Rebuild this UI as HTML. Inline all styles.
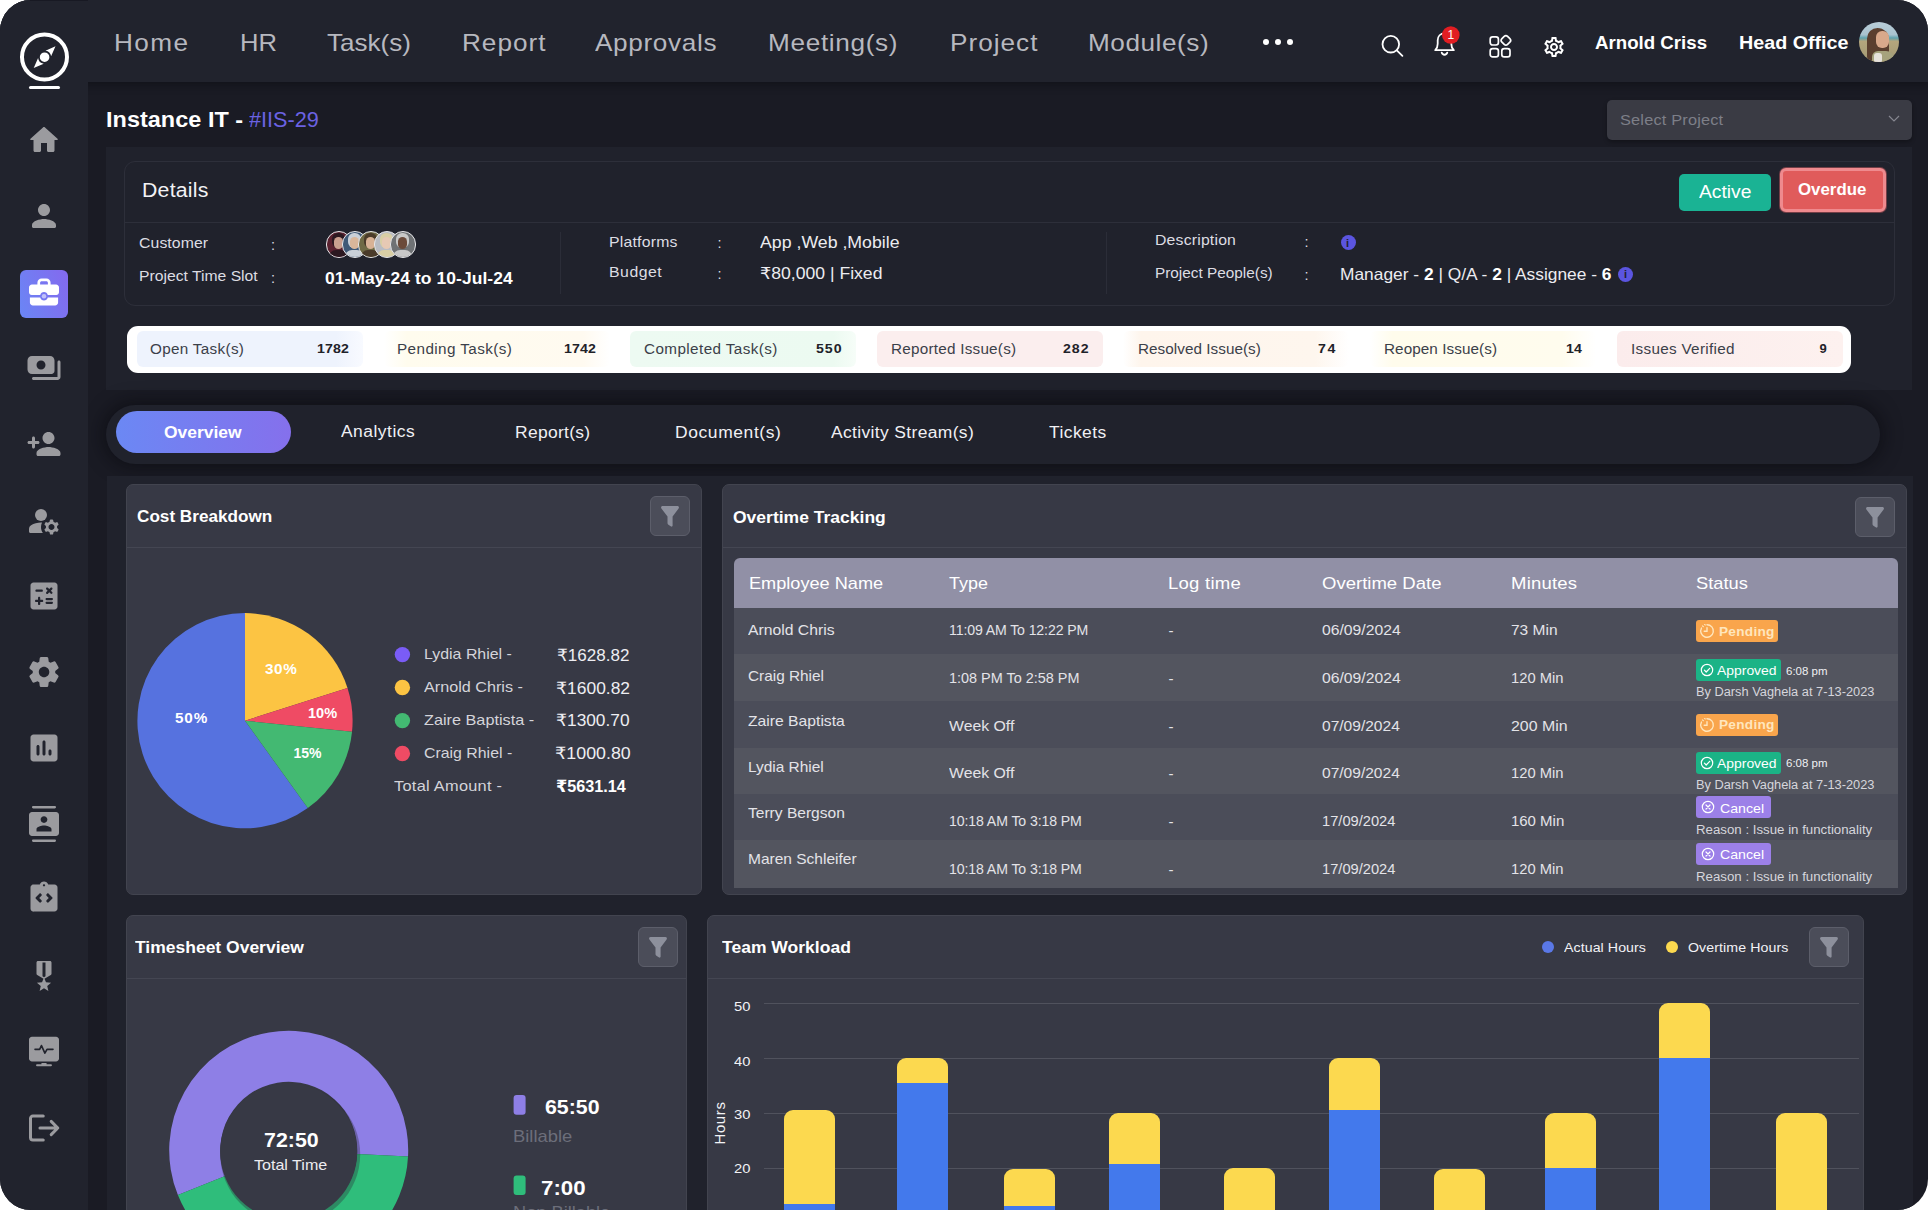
<!DOCTYPE html>
<html lang="en"><head><meta charset="utf-8"><title>Instance IT - Project Dashboard</title>
<style>
*{box-sizing:border-box;margin:0;padding:0}
html,body{width:1928px;height:1210px;background:#fff;overflow:hidden}
body{font-family:"Liberation Sans","DejaVu Sans",sans-serif}
#app{position:absolute;left:0;top:0;width:1928px;height:1210px;background:#1a1b24;border-radius:31px;overflow:hidden}
.a{position:absolute}
.t{position:absolute;white-space:nowrap;transform-origin:0 50%}
.t b{font-weight:700;color:#fff}
#side{left:0;top:0;width:88px;height:1210px;background:#21232d}
#top{left:0;top:0;width:1928px;height:82px;background:#21232d;box-shadow:0 3px 8px rgba(8,8,14,.45)}
.panel{background:#20222c}
.card{background:#373945;border:1px solid #42444f;border-radius:7px}
.hr{height:1px;background:#444652}
.fbtn{width:40px;height:40px;border-radius:6px;background:#4b4d59;border:1px solid #5c5e6a}
.pill{top:330.5px;height:36.5px;width:226px;border-radius:6px}
.row{left:734px;width:1164px;height:47px}
.bdg{height:22px;border-radius:3px}
.bar{width:51px;border-radius:9px 9px 0 0}
.grid{left:764px;width:1095px;height:1px;background:#50525d}
.ic{position:absolute;left:26px;width:36px;height:36px;fill:#9b9b9f}
</style></head><body>
<div id="app">
<!-- main panels -->
<div class="a panel" style="left:106px;top:147px;width:1806px;height:243px"></div>
<div class="a" style="left:106px;top:405px;width:1774px;height:59px;border-radius:30px;background:#20222c;box-shadow:0 0 18px 3px rgba(8,8,14,.6)"></div>
<div class="a panel" style="left:107px;top:476px;width:1806px;height:740px"></div>
<div id="top" class="a"></div>
<div id="side" class="a"></div>
<div class="a" style="left:30px;top:0;width:58px;height:1px;background:#181923"></div>
<!--SIDEBAR_S-->
<!-- logo -->
<svg class="a" style="left:18px;top:30px" width="54" height="62" viewBox="0 0 54 62">
<circle cx="26.5" cy="27" r="22.5" fill="none" stroke="#fff" stroke-width="4"/>
<g transform="translate(26.6 27.2) rotate(45)"><path d="M0 -15.4L4 -5.2A6.56 6.56 0 0 0 -4 -5.2ZM0 15.4L-4 5.2A6.56 6.56 0 0 0 4 5.2Z" fill="#fff"/><circle r="4.8" fill="#fff"/></g>
<rect x="11" y="56" width="31" height="3" rx="1.5" fill="#fff"/>
</svg>
<!-- sidebar icons -->
<svg class="ic" style="top:121.5px" viewBox="0 0 24 24"><path d="M10 19v-5h4v5c0 .55.45 1 1 1h3c.55 0 1-.45 1-1v-7h1.700c.46 0 .68-.57.330-.870L12.670 3.600c-.38-.34-.96-.34-1.340 0l-8.360 7.530c-.34.300-.13.870.330.870H5v7c0 .55.45 1 1 1h3c.55 0 1-.45 1-1z"/></svg>
<svg class="ic" style="top:198px" viewBox="0 0 24 24"><path d="M12 12c2.210 0 4-1.790 4-4s-1.790-4-4-4-4 1.790-4 4 1.790 4 4 4zm0 2c-2.670 0-8 1.340-8 4v1c0 .55.45 1 1 1h14c.55 0 1-.45 1-1v-1c0-2.660-5.330-4-8-4z"/></svg>
<div class="a" style="left:20px;top:270px;width:48px;height:48px;border-radius:6px;background:linear-gradient(70deg,#6a86f5,#8469ee)"></div>
<svg class="a" style="left:26px;top:274px" width="36" height="36" viewBox="0 0 24 24"><path fill="#fff" d="M20 7h-3.600V5.800C16.400 4.250 15.150 3 13.600 3h-3.200C8.850 3 7.600 4.250 7.600 5.800V7H4c-1.100 0-2 .9-2 2v3.200c0 .99.800 1.800 1.800 1.800h5.700c.28-1.150 1.300-2 2.500-2s2.220.85 2.500 2h5.700c1 0 1.800-.81 1.800-1.800V9c0-1.100-.9-2-2-2zM9.400 5.800c0-.55.45-1 1-1h3.200c.55 0 1 .45 1 1V7H9.400V5.800zM2.600 15.600V19c0 1.100.9 2 2 2h14.800c1.100 0 2-.9 2-2v-3.400h-6.900c-.28 1.150-1.300 2-2.500 2s-2.220-.85-2.500-2H2.600z"/><circle cx="12" cy="14.800" r="1.500" fill="#fff" opacity=".55"/></svg>
<svg class="ic" style="top:350px" viewBox="0 0 24 24"><path d="M23 8v10c0 1.100-.9 2-2 2H5c-.55 0-1-.45-1-1s.45-1 1-1h16V8c0-.55.45-1 1-1s1 .45 1 1zM4 16c-1.660 0-3-1.340-3-3V7c0-1.660 1.340-3 3-3h12c1.660 0 3 1.340 3 3v7c0 1.100-.9 2-2 2H4zm3-6c0 1.660 1.340 3 3 3s3-1.340 3-3-1.340-3-3-3-3 1.340-3 3z"/></svg>
<svg class="ic" style="top:426px" viewBox="0 0 24 24"><path d="M15 12c2.210 0 4-1.790 4-4s-1.790-4-4-4-4 1.790-4 4 1.790 4 4 4zm-9-2V8c0-.55-.45-1-1-1s-1 .45-1 1v2H2c-.55 0-1 .45-1 1s.45 1 1 1h2v2c0 .55.45 1 1 1s1-.45 1-1v-2h2c.55 0 1-.45 1-1s-.45-1-1-1H6zm9 4c-2.670 0-8 1.340-8 4v1c0 .55.45 1 1 1h14c.55 0 1-.45 1-1v-1c0-2.660-5.330-4-8-4z"/></svg>
<svg class="ic" style="top:503px" viewBox="0 0 24 24"><circle cx="10" cy="8" r="4"/><path d="M10.670 13.020C10.450 13.010 10.230 13 10 13c-2.420 0-4.680.67-6.610 1.820C2.510 15.340 2 16.320 2 17.350V19c0 .55.45 1 1 1h8.260c-.790-1.130-1.260-2.510-1.260-4 0-1.070.25-2.070.67-2.980z"/><path d="M20.750 16c0-.22-.03-.42-.06-.63l.84-.73c.18-.16.22-.42.1-.63l-.59-1.020c-.12-.21-.37-.3-.59-.22l-1.060.36c-.32-.27-.68-.48-1.080-.63l-.22-1.090c-.05-.23-.25-.4-.49-.4h-1.180c-.24 0-.44.17-.49.4l-.22 1.090c-.4.15-.76.36-1.080.63l-1.060-.36c-.23-.08-.47.02-.59.22l-.59 1.020c-.12.210-.08.470.1.630l.84.730c-.03.210-.06.410-.06.630s.03.420.06.630l-.84.730c-.18.160-.22.420-.1.630l.59 1.020c.12.210.37.300.59.220l1.060-.36c.32.27.68.48 1.080.63l.22 1.090c.05.230.25.400.49.400h1.180c.24 0 .44-.17.49-.4l.22-1.090c.4-.15.76-.36 1.080-.63l1.060.36c.23.080.47-.02.59-.22l.59-1.020c.12-.21.080-.47-.1-.63l-.84-.73c.03-.21.06-.41.06-.63zM17 18c-1.100 0-2-.9-2-2s.9-2 2-2 2 .9 2 2-.9 2-2 2z"/></svg>
<svg class="ic" style="top:578px" viewBox="0 0 24 24"><path d="M19 3H5c-1.100 0-2 .9-2 2v14c0 1.100.9 2 2 2h14c1.100 0 2-.9 2-2V5c0-1.100-.9-2-2-2zm-5.440 3.530c.29-.29.77-.29 1.060 0l.88.880.88-.880c.29-.29.77-.29 1.060 0 .29.290.29.770 0 1.060l-.880.880.880.880c.29.290.29.770 0 1.060-.29.290-.77.290-1.060 0l-.880-.870-.880.880c-.29.290-.77.290-1.060 0-.29-.29-.29-.77 0-1.060l.880-.880-.880-.880c-.3-.3-.3-.78 0-1.070zM7 7.720h3.500c.41 0 .75.340.75.750s-.34.750-.75.750H7c-.41 0-.75-.34-.75-.75s.34-.75.750-.75zM10.750 16H9.500v1.250c0 .41-.34.750-.75.750S8 17.660 8 17.250V16H6.750c-.41 0-.75-.34-.75-.75s.34-.75.750-.75H8v-1.250c0-.41.34-.75.750-.75s.75.340.75.750v1.250h1.250c.41 0 .75.340.75.750s-.34.750-.75.750zm6.500 1.250h-3.500c-.41 0-.75-.34-.75-.75s.34-.75.750-.75h3.500c.41 0 .75.340.75.750s-.34.750-.75.750zm0-2.500h-3.500c-.41 0-.75-.34-.75-.75s.34-.75.750-.75h3.500c.41 0 .75.340.75.750s-.34.750-.75.750z"/></svg>
<svg class="ic" style="top:654px" viewBox="0 0 24 24"><path d="M19.500 12c0-.23-.01-.45-.03-.68l1.860-1.410c.4-.3.510-.86.260-1.300l-1.870-3.230c-.25-.44-.79-.62-1.250-.42l-2.150.91c-.37-.26-.76-.49-1.170-.68l-.29-2.310C14.800 2.380 14.370 2 13.870 2h-3.730c-.51 0-.94.380-1 .88l-.29 2.310c-.41.190-.8.420-1.170.68l-2.150-.91c-.46-.2-1-.02-1.250.42L2.410 8.620c-.25.44-.14.990.26 1.300l1.860 1.410c-.02.220-.03.440-.03.670s.01.45.03.680l-1.860 1.410c-.4.300-.51.860-.26 1.300l1.870 3.230c.25.440.79.620 1.250.42l2.150-.91c.37.260.76.490 1.170.68l.29 2.310c.06.500.49.880.99.880h3.730c.5 0 .93-.38.990-.88l.29-2.310c.41-.19.8-.42 1.170-.68l2.150.91c.46.200 1 .02 1.250-.42l1.870-3.230c.25-.44.140-.99-.26-1.300l-1.860-1.410c.03-.23.040-.45.040-.68zm-7.460 3.500c-1.930 0-3.500-1.570-3.500-3.500s1.570-3.500 3.500-3.500 3.500 1.570 3.500 3.500-1.570 3.500-3.500 3.500z"/></svg>
<svg class="ic" style="top:730px" viewBox="0 0 24 24"><path d="M19 3H5c-1.100 0-2 .9-2 2v14c0 1.100.9 2 2 2h14c1.100 0 2-.9 2-2V5c0-1.100-.9-2-2-2zM8 17c-.55 0-1-.45-1-1v-5c0-.55.45-1 1-1s1 .45 1 1v5c0 .55-.45 1-1 1zm4 0c-.55 0-1-.45-1-1V8c0-.55.45-1 1-1s1 .45 1 1v8c0 .55-.45 1-1 1zm4 0c-.55 0-1-.45-1-1v-2c0-.55.45-1 1-1s1 .45 1 1v2c0 .55-.45 1-1 1z"/></svg>
<svg class="ic" style="top:806px" viewBox="0 0 24 24"><path d="M20 4H4c-1.100 0-2 .9-2 2v12c0 1.100.9 2 2 2h16c1.100 0 2-.9 2-2V6c0-1.100-.9-2-2-2zm-8 2.750c1.240 0 2.250 1.010 2.250 2.250s-1.010 2.250-2.250 2.250S9.750 10.240 9.750 9 10.760 6.750 12 6.750zM17 17H7v-1.500c0-1.670 3.330-2.500 5-2.500s5 .83 5 2.500V17zM4.800 0h14.400c.44 0 .8.360.8.800s-.36.800-.8.800H4.800c-.44 0-.8-.36-.8-.8s.36-.8.800-.8zM4.800 22.400h14.400c.44 0 .8.360.8.800s-.36.800-.8.800H4.800c-.44 0-.8-.36-.8-.8s.36-.8.800-.8z"/></svg>
<svg class="ic" style="top:880px" viewBox="0 0 24 24"><path d="M19 3h-4.180C14.400 1.840 13.300 1 12 1s-2.400.84-2.820 2H5c-.14 0-.27.010-.4.040-.39.080-.74.280-1.010.55-.18.180-.33.400-.43.640-.1.230-.16.490-.16.770v14c0 .27.060.54.160.78s.25.450.43.640c.27.270.62.470 1.010.55.130.2.260.3.400.03h14c1.100 0 2-.9 2-2V5c0-1.100-.9-2-2-2zm-8.700 10.470c.29.290.29.770 0 1.060l-.35.350c-.29.290-.77.290-1.060 0l-2.350-2.350c-.29-.29-.29-.77 0-1.060l2.350-2.350c.29-.29.770-.29 1.060 0l.35.350c.29.290.29.770 0 1.060L8.830 12l1.470 1.470zM12 4.250c-.41 0-.75-.34-.75-.75s.34-.75.750-.75.750.34.750.75-.34.750-.75.750zm1.700 10.280c-.29-.29-.29-.77 0-1.060L15.170 12l-1.470-1.470c-.29-.29-.29-.77 0-1.060l.35-.35c.29-.29.770-.29 1.060 0l2.350 2.350c.29.290.29.770 0 1.060l-2.350 2.350c-.29.290-.77.290-1.060 0l-.35-.35z"/></svg>
<svg class="ic" style="top:958px" viewBox="0 0 24 24"><path d="M17 10.430V3c0-.55-.45-1-1-1H8c-.55 0-1 .45-1 1v7.430c0 .35.180.680.490.860l4.180 2.510-.99 2.340-3.410.29 2.590 2.240L9.070 22 12 20.230 14.930 22l-.78-3.330 2.590-2.240-3.410-.29-.99-2.340 4.180-2.510c.3-.18.480-.5.480-.86zm-4 1.800l-1 .6-1-.6V3h2v9.230z"/></svg>
<svg class="ic" style="top:1033px" viewBox="0 0 24 24"><path d="M20 2.500H4c-1.100 0-2 .9-2 2V17c0 1.100.9 2 2 2h16c1.100 0 2-.9 2-2V4.500c0-1.100-.9-2-2-2zM10.300 20h3.400v.900h3c.33 0 .6.270.6.600s-.27.600-.6.600H7.300c-.33 0-.6-.27-.6-.600s.27-.600.600-.600h3V20z"/><path d="M6 10.900h3.100l1.200-2.500 2.300 5 1.400-2.500H18" fill="none" stroke="#21232d" stroke-width="1.100" stroke-linejoin="round" stroke-linecap="round"/></svg>
<svg class="ic" style="top:1110px;fill:none;stroke:#9b9b9f;stroke-width:2;stroke-linecap:round;stroke-linejoin:round" viewBox="0 0 24 24"><path d="M11.500 4H4.600C3.700 4 3 4.700 3 5.600v12.800c0 .900.700 1.600 1.600 1.600h6.900"/><path d="M9.300 12h11.700M16.800 7.600l4.400 4.400-4.400 4.400"/></svg>
<!--SIDEBAR_E-->
<!--TOPICONS_S-->
<div class="a" style="left:1263px;top:39px;width:6px;height:6px;border-radius:50%;background:#fff"></div>
<div class="a" style="left:1275px;top:39px;width:6px;height:6px;border-radius:50%;background:#fff"></div>
<div class="a" style="left:1287px;top:39px;width:6px;height:6px;border-radius:50%;background:#fff"></div>
<svg class="a" style="left:1378px;top:31px" width="30" height="30" viewBox="0 0 30 30"><circle cx="12.800" cy="13.200" r="8.300" fill="none" stroke="#fff" stroke-width="1.800"/><path d="M18.800 19.300L24.400 24.900" stroke="#fff" stroke-width="1.800" stroke-linecap="round"/></svg>
<svg class="a" style="left:1430px;top:24px" width="34" height="36" viewBox="0 0 34 36"><path d="M5.200 26.200h18.600c-1.700-1.600-2.500-3.500-2.500-6.500v-3.400c0-4-2.800-6.900-6.800-6.900s-6.800 2.900-6.800 6.900v3.400c0 3-.8 4.900-2.500 6.500z" fill="none" stroke="#fff" stroke-width="1.800" stroke-linejoin="round"/><path d="M11.700 28.600a2.900 2.900 0 0 0 5.600 0" fill="none" stroke="#fff" stroke-width="1.800" stroke-linecap="round"/><circle cx="20.800" cy="11" r="8.800" fill="#e11d22"/></svg>
<svg class="a" style="left:1488px;top:34px" width="26" height="26" viewBox="0 0 26 26"><g fill="none" stroke="#fff" stroke-width="1.700"><rect x="2.200" y="2.800" width="8.200" height="8.200" rx="2.400"/><rect x="2.200" y="14.600" width="8.200" height="8.200" rx="2.400"/><rect x="13.800" y="14.600" width="8.200" height="8.200" rx="2.400"/><rect x="13.900" y="2.400" width="8" height="8" rx="2.400" transform="rotate(45 17.900 6.400)"/></g></svg>
<svg class="a" style="left:1541.500px;top:34.500px" width="24" height="24" viewBox="0 0 24 24"><path fill="#fff" d="M19.430 12.980c.04-.32.070-.64.070-.98 0-.34-.03-.66-.07-.98l2.110-1.650c.19-.15.240-.42.120-.64l-2-3.460c-.09-.16-.26-.25-.44-.25-.06 0-.12.010-.17.030l-2.490 1c-.52-.4-1.080-.73-1.690-.98l-.38-2.650C14.460 2.180 14.250 2 14 2h-4c-.25 0-.46.180-.49.420l-.38 2.650c-.61.250-1.170.59-1.690.98l-2.490-1c-.06-.02-.12-.03-.18-.03-.17 0-.34.09-.43.250l-2 3.460c-.13.220-.07.490.12.640l2.110 1.650c-.04.320-.07.650-.07.980s.03.660.07.980l-2.110 1.650c-.19.150-.24.420-.12.640l2 3.460c.09.160.26.250.44.250.06 0 .12-.01.17-.03l2.490-1c.52.400 1.080.73 1.690.98l.38 2.650c.03.240.24.420.49.420h4c.25 0 .46-.18.490-.42l.38-2.650c.61-.25 1.170-.59 1.690-.98l2.490 1c.06.020.12.030.18.030.17 0 .34-.09.43-.25l2-3.460c.12-.22.070-.49-.12-.64l-2.110-1.650zm-1.980-1.710c.04.310.05.520.05.730 0 .21-.02.430-.05.730l-.14 1.130.89.700 1.080.84-.7 1.210-1.270-.51-1.040-.42-.9.680c-.43.320-.84.560-1.250.73l-1.060.43-.16 1.130-.2 1.350h-1.400l-.19-1.350-.16-1.130-1.060-.43c-.43-.18-.83-.41-1.230-.71l-.91-.7-1.060.43-1.270.51-.7-1.210 1.080-.84.890-.7-.14-1.130c-.03-.31-.05-.54-.05-.74s.02-.43.050-.73l.14-1.130-.89-.7-1.080-.84.700-1.210 1.270.51 1.040.42.900-.68c.43-.32.840-.56 1.250-.73l1.060-.43.160-1.130.2-1.350h1.390l.19 1.350.16 1.130 1.060.43c.43.180.83.410 1.230.71l.91.700 1.060-.43 1.270-.51.700 1.210-1.070.85-.89.700.14 1.130zM12 8c-2.210 0-4 1.790-4 4s1.790 4 4 4 4-1.790 4-4-1.790-4-4-4zm0 6c-1.100 0-2-.9-2-2s.9-2 2-2 2 .9 2 2-.9 2-2 2z"/></svg>
<div class="a" style="left:1859px;top:22px;width:40px;height:40px;border-radius:50%;overflow:hidden;background:linear-gradient(180deg,#b9cdd8 0,#a9c3cf 32%,#5fa3ae 40%,#b4a57d 48%,#a39a74 100%)"><div class="a" style="left:8px;top:6px;width:22px;height:36px;border-radius:11px 12px 6px 8px;background:#5b3f2f"></div><div class="a" style="left:17px;top:9px;width:13px;height:17px;border-radius:6px;background:#d9a98b"></div><div class="a" style="left:13px;top:29px;width:22px;height:14px;border-radius:6px 8px 0 0;background:#a6a27d"></div><div class="a" style="left:15px;top:31px;width:8px;height:10px;background:#e7e2dc;border-radius:3px"></div></div>
<!--TOPICONS_E-->
<!-- select -->
<div class="a" style="left:1607px;top:100px;width:305px;height:40px;border-radius:5px;background:#3a3b44;box-shadow:0 2px 4px rgba(0,0,0,.3)"></div>
<svg class="a" style="left:1887px;top:114px" width="14" height="9" viewBox="0 0 14 9"><path d="M2 2l5 5 5-5" fill="none" stroke="#85868f" stroke-width="1.2"/></svg>
<!-- details card -->
<div class="a" style="left:124px;top:161px;width:1771px;height:145px;border:1px solid #2d2f3a;border-radius:11px"></div>
<div class="a" style="left:125px;top:222px;width:1769px;height:1px;background:#2d2f3a"></div>
<div class="a" style="left:560px;top:232px;width:1px;height:62px;background:#2b2d38"></div>
<div class="a" style="left:1106px;top:232px;width:1px;height:62px;background:#2b2d38"></div>
<!--AVATARS_S-->
<div class="a" style="left:325.5px;top:231px;width:26.5px;height:26.5px;border-radius:50%;border:1.5px solid #e7e7ea;background:#5a2230;overflow:hidden"><div class="a" style="left:5px;top:1px;width:13px;height:15px;border-radius:6px;background:#2b1820"></div><div class="a" style="left:7px;top:5px;width:9.5px;height:12px;border-radius:5px;background:#caa08f"></div><div class="a" style="left:2px;top:18px;width:19px;height:10px;border-radius:7px 7px 0 0;background:#2b1820"></div></div>
<div class="a" style="left:341.6px;top:231px;width:26.5px;height:26.5px;border-radius:50%;border:1.5px solid #e7e7ea;background:#3f5a78;overflow:hidden"><div class="a" style="left:5px;top:1px;width:13px;height:15px;border-radius:6px;background:#c9d0d8"></div><div class="a" style="left:7px;top:5px;width:9.5px;height:12px;border-radius:5px;background:#d9b69a"></div><div class="a" style="left:2px;top:18px;width:19px;height:10px;border-radius:7px 7px 0 0;background:#c9d0d8"></div></div>
<div class="a" style="left:357.6px;top:231px;width:26.5px;height:26.5px;border-radius:50%;border:1.5px solid #e7e7ea;background:#6f6a45;overflow:hidden"><div class="a" style="left:5px;top:1px;width:13px;height:15px;border-radius:6px;background:#4a3b2a"></div><div class="a" style="left:7px;top:5px;width:9.5px;height:12px;border-radius:5px;background:#d8b295"></div><div class="a" style="left:2px;top:18px;width:19px;height:10px;border-radius:7px 7px 0 0;background:#4a3b2a"></div></div>
<div class="a" style="left:373.6px;top:231px;width:26.5px;height:26.5px;border-radius:50%;border:1.5px solid #e7e7ea;background:#b9bcc2;overflow:hidden"><div class="a" style="left:5px;top:1px;width:13px;height:15px;border-radius:6px;background:#d9cfa5"></div><div class="a" style="left:7px;top:5px;width:9.5px;height:12px;border-radius:5px;background:#e6c9b4"></div><div class="a" style="left:2px;top:18px;width:19px;height:10px;border-radius:7px 7px 0 0;background:#d9cfa5"></div></div>
<div class="a" style="left:389.7px;top:231px;width:26.5px;height:26.5px;border-radius:50%;border:1.5px solid #e7e7ea;background:#6f7275;overflow:hidden"><div class="a" style="left:5px;top:1px;width:13px;height:15px;border-radius:6px;background:#c8c8c8"></div><div class="a" style="left:7px;top:5px;width:9.5px;height:12px;border-radius:5px;background:#6b4a3a"></div><div class="a" style="left:2px;top:18px;width:19px;height:10px;border-radius:7px 7px 0 0;background:#c8c8c8"></div></div>
<!--AVATARS_E-->
<div class="a" style="left:1340.5px;top:235px;width:15px;height:15px;border-radius:50%;background:#5b55e0"></div>
<div class="a" style="left:1618.3px;top:266.5px;width:15px;height:15px;border-radius:50%;background:#5b55e0"></div>
<div class="a" style="left:1679px;top:173.5px;width:91.5px;height:37.5px;border-radius:5px;background:#1ab394"></div>
<div class="a" style="left:1780px;top:168px;width:106px;height:44px;border-radius:6px;background:#e05b5b;border:3px solid #ef8a8e;box-shadow:0 0 0 1px rgba(200,90,95,.5)"></div>
<!-- stat bar -->
<div class="a" style="left:127px;top:326px;width:1724px;height:47px;border-radius:11px;background:#fff"></div>
<div class="a pill" style="left:137px;background:linear-gradient(90deg,#eef3fd 0,#eef3fd 88%,#f8faff 100%)"></div>
<div class="a pill" style="left:384px;background:linear-gradient(90deg,#fff 0,#fffcee 10%,#fffaf0 88%,#fff 100%)"></div>
<div class="a pill" style="left:630px;background:linear-gradient(90deg,#edfaf2 0,#ecfaf1 90%,#f6fdf8 100%)"></div>
<div class="a pill" style="left:877px;background:#fbeeee"></div>
<div class="a pill" style="left:1123px;background:linear-gradient(90deg,#fff 0,#fef5ec 8%,#fef6ee 85%,#fff 100%)"></div>
<div class="a pill" style="left:1370px;background:linear-gradient(90deg,#fff 0,#fffcec 10%,#fffcee 85%,#fff 100%)"></div>
<div class="a pill" style="left:1617px;background:linear-gradient(90deg,#fbecec 0,#fdf1ef 100%)"></div>
<!-- tabs -->
<div class="a" style="left:116px;top:411px;width:175px;height:42px;border-radius:21px;background:linear-gradient(90deg,#6b88f4,#8570ec)"></div>
<!-- cards -->
<div class="a card" style="left:126px;top:484px;width:576px;height:411px"></div>
<div class="a hr" style="left:127px;top:547px;width:574px"></div>
<div class="a fbtn" style="left:650px;top:496px"></div>
<div class="a card" style="left:722px;top:484px;width:1185px;height:411px"></div>
<div class="a hr" style="left:723px;top:547px;width:1183px"></div>
<div class="a fbtn" style="left:1855px;top:497px"></div>
<div class="a card" style="left:126px;top:915px;width:561px;height:320px"></div>
<div class="a hr" style="left:127px;top:978px;width:559px"></div>
<div class="a fbtn" style="left:638px;top:927px"></div>
<div class="a card" style="left:707px;top:915px;width:1157px;height:320px"></div>
<div class="a hr" style="left:708px;top:978px;width:1155px"></div>
<div class="a fbtn" style="left:1809px;top:927px"></div>
<!--FUNNELS_S-->
<svg class="a" style="left:660px;top:505px" width="20" height="23" viewBox="0 0 20 23"><path d="M2.600 1h14.800c1.300 0 2 1.400 1.200 2.400l-6 8V20.600c0 .8-.8 1.300-1.500.9l-2.700-1.700c-.5-.3-.9-.9-.9-1.500v-6.900l-6.100-8C.6 2.400 1.300 1 2.600 1z" fill="#8d909c"/></svg>
<svg class="a" style="left:1865px;top:506px" width="20" height="23" viewBox="0 0 20 23"><path d="M2.600 1h14.800c1.300 0 2 1.400 1.200 2.400l-6 8V20.600c0 .8-.8 1.300-1.500.9l-2.700-1.700c-.5-.3-.9-.9-.9-1.500v-6.900l-6.100-8C.6 2.400 1.300 1 2.600 1z" fill="#8d909c"/></svg>
<svg class="a" style="left:648px;top:936px" width="20" height="23" viewBox="0 0 20 23"><path d="M2.600 1h14.800c1.300 0 2 1.400 1.200 2.400l-6 8V20.600c0 .8-.8 1.300-1.500.9l-2.700-1.700c-.5-.3-.9-.9-.9-1.500v-6.900l-6.100-8C.6 2.400 1.300 1 2.600 1z" fill="#8d909c"/></svg>
<svg class="a" style="left:1819px;top:936px" width="20" height="23" viewBox="0 0 20 23"><path d="M2.600 1h14.800c1.300 0 2 1.400 1.200 2.400l-6 8V20.600c0 .8-.8 1.300-1.500.9l-2.700-1.700c-.5-.3-.9-.9-.9-1.500v-6.900l-6.100-8C.6 2.400 1.300 1 2.600 1z" fill="#8d909c"/></svg>
<!--FUNNELS_E-->
<!--PIE_S-->
<svg class="a" style="left:0;top:0" width="720" height="900" viewBox="0 0 720 900"><path d="M245 720.7L307.79 808.08A107.6 107.6 0 1 1 245.00 613.10Z" fill="#5672df"/><path d="M245 720.7L245.00 613.10A107.6 107.6 0 0 1 347.51 687.99Z" fill="#fcc443"/><path d="M245 720.7L347.51 687.99A107.6 107.6 0 0 1 352.03 731.76Z" fill="#ef4b64"/><path d="M245 720.7L352.03 731.76A107.6 107.6 0 0 1 307.79 808.08Z" fill="#43b972"/><circle cx="402.400" cy="654.6" r="7.700" fill="#7a5cf6"/><circle cx="402.400" cy="687.5" r="7.700" fill="#fcc443"/><circle cx="402.400" cy="720.6" r="7.700" fill="#43b972"/><circle cx="402.400" cy="753.5" r="7.700" fill="#ef4b64"/></svg>
<!--PIE_E-->
<!--TABLE_S-->
<div class="a" style="left:734px;top:558px;width:1164px;height:50px;background:#9190a6;border-radius:6px 6px 0 0"></div><div class="a row" style="top:608px;height:46px;background:#4b4d59"></div><div class="a row" style="top:654px;height:47px;background:#53555f"></div><div class="a row" style="top:701px;height:47px;background:#4b4d59"></div><div class="a row" style="top:748px;height:46px;background:#53555f"></div><div class="a row" style="top:794px;height:46px;background:#4b4d59"></div><div class="a row" style="top:840px;height:48px;background:#53555f"></div><div class="a bdg" style="left:1696.3px;top:620.3px;width:82px;background:#f9a54c"></div><div class="a bdg" style="left:1696.3px;top:714px;width:82px;background:#f9a54c"></div><div class="a bdg" style="left:1696.3px;top:659.3px;width:85.2px;background:#1bb386"></div><div class="a bdg" style="left:1696.3px;top:751.8px;width:85.2px;background:#1bb386"></div><div class="a bdg" style="left:1696.3px;top:796.4px;width:75.2px;background:#9c80e8"></div><div class="a bdg" style="left:1696.3px;top:843.2px;width:75.2px;background:#9c80e8"></div><svg class="a" style="left:1698.8px;top:623.3px" width="16" height="16" viewBox="0 0 16 16"><path d="M8 1.700A6.300 6.300 0 1 1 2.500 5" fill="none" stroke="#ffe6bd" stroke-width="1.400" stroke-linecap="round"/><path d="M8 4.600V8.300H5.200" fill="none" stroke="#ffe6bd" stroke-width="1.400" stroke-linecap="round"/><path d="M3.400 2.900l1 .8M5.500 1.600l.9.400" stroke="#ffe6bd" stroke-width="1.100" stroke-linecap="round"/></svg><svg class="a" style="left:1698.8px;top:717px" width="16" height="16" viewBox="0 0 16 16"><path d="M8 1.700A6.300 6.300 0 1 1 2.500 5" fill="none" stroke="#ffe6bd" stroke-width="1.400" stroke-linecap="round"/><path d="M8 4.600V8.300H5.200" fill="none" stroke="#ffe6bd" stroke-width="1.400" stroke-linecap="round"/><path d="M3.400 2.900l1 .8M5.500 1.600l.9.400" stroke="#ffe6bd" stroke-width="1.100" stroke-linecap="round"/></svg><svg class="a" style="left:1699.8px;top:663.3px" width="14" height="14" viewBox="0 0 14 14"><circle cx="7" cy="7" r="5.700" fill="none" stroke="#fff" stroke-width="1.200"/><path d="M4.400 7.200l1.800 1.800 3.500-3.700" fill="none" stroke="#fff" stroke-width="1.200" stroke-linecap="round" stroke-linejoin="round"/></svg><svg class="a" style="left:1699.8px;top:755.8px" width="14" height="14" viewBox="0 0 14 14"><circle cx="7" cy="7" r="5.700" fill="none" stroke="#fff" stroke-width="1.200"/><path d="M4.400 7.200l1.800 1.800 3.500-3.700" fill="none" stroke="#fff" stroke-width="1.200" stroke-linecap="round" stroke-linejoin="round"/></svg><svg class="a" style="left:1700.5px;top:800.4px" width="14" height="14" viewBox="0 0 14 14"><circle cx="7" cy="7" r="5.700" fill="none" stroke="#fff" stroke-width="1.200"/><path d="M5 5l4 4M9 5l-4 4" fill="none" stroke="#fff" stroke-width="1.200" stroke-linecap="round"/></svg><svg class="a" style="left:1700.5px;top:847.2px" width="14" height="14" viewBox="0 0 14 14"><circle cx="7" cy="7" r="5.700" fill="none" stroke="#fff" stroke-width="1.200"/><path d="M5 5l4 4M9 5l-4 4" fill="none" stroke="#fff" stroke-width="1.200" stroke-linecap="round"/></svg>
<!--TABLE_E-->
<!--DONUT_S-->
<svg class="a" style="left:126px;top:980px" width="560" height="236" viewBox="126 980 560 236"><path d="M177.90 1195.07A119.5 119.5 0 1 1 408.04 1156.55L357.11 1153.89A68.5 68.5 0 1 0 225.19 1175.96Z" fill="#8e7fe6"/><path d="M408.04 1156.55A119.5 119.5 0 0 1 177.90 1195.07L225.19 1175.96A68.5 68.5 0 0 0 357.11 1153.89Z" fill="#2fbd7b"/><circle cx="290.2" cy="1154.3" r="70.0" fill="#2a2c36" opacity=".35"/><circle cx="288.7" cy="1151.8999999999999" r="68.5" fill="#373945"/><rect x="513.600" y="1095" width="12" height="19.700" rx="3" fill="#8e7fe6"/><rect x="513.600" y="1175.400" width="12" height="19.700" rx="3" fill="#2fbd7b"/></svg>
<!--DONUT_E-->
<!--BARS_S-->
<div class="a grid" style="top:1002.5px"></div><div class="a grid" style="top:1057.9px"></div><div class="a grid" style="top:1112.7px"></div><div class="a grid" style="top:1167.5px"></div><div class="a bar" style="left:784px;top:1110px;height:130px;background:#fcd94f"></div><div class="a" style="left:784px;top:1204px;width:51px;height:36px;background:#4379ec"></div><div class="a bar" style="left:897.4px;top:1058.2px;height:181.79999999999995px;background:#fcd94f"></div><div class="a" style="left:897.4px;top:1083.3px;width:51px;height:156.70000000000005px;background:#4379ec"></div><div class="a bar" style="left:1004.2px;top:1168.5px;height:71.5px;background:#fcd94f"></div><div class="a" style="left:1004.2px;top:1205.5px;width:51px;height:34.5px;background:#4379ec"></div><div class="a bar" style="left:1108.7px;top:1113px;height:127px;background:#fcd94f"></div><div class="a" style="left:1108.7px;top:1163.8px;width:51px;height:76.20000000000005px;background:#4379ec"></div><div class="a bar" style="left:1224px;top:1168px;height:72px;background:#fcd94f"></div><div class="a bar" style="left:1328.9px;top:1058.2px;height:181.79999999999995px;background:#fcd94f"></div><div class="a" style="left:1328.9px;top:1110px;width:51px;height:130px;background:#4379ec"></div><div class="a bar" style="left:1434px;top:1168.5px;height:71.5px;background:#fcd94f"></div><div class="a bar" style="left:1545.3px;top:1113px;height:127px;background:#fcd94f"></div><div class="a" style="left:1545.3px;top:1167.5px;width:51px;height:72.5px;background:#4379ec"></div><div class="a bar" style="left:1658.8px;top:1003px;height:237px;background:#fcd94f"></div><div class="a" style="left:1658.8px;top:1058.2px;width:51px;height:181.79999999999995px;background:#4379ec"></div><div class="a bar" style="left:1776px;top:1113px;height:127px;background:#fcd94f"></div><div class="a" style="left:1542.200px;top:941.300px;width:12px;height:12px;border-radius:50%;background:#5a78e6"></div><div class="a" style="left:1665.700px;top:941.300px;width:12px;height:12px;border-radius:50%;background:#fcd94f"></div><div class="t" style="left:689.600px;top:1113px;width:60px;height:20px;line-height:20px;text-align:center;font-size:15px;letter-spacing:.6px;color:#f2f2f5;transform-origin:50% 50%;transform:rotate(-90deg)">Hours</div>
<!--BARS_E-->
<span class="t" style="font-size:24px;letter-spacing:1.34px;left:114.0px;transform:scaleX(1.090);top:27.4px;line-height:31px;color:#b7b8bf;">Home</span>
<span class="t" style="font-size:24px;left:240.0px;transform:scaleX(1.065);top:27.4px;line-height:31px;color:#b7b8bf;">HR</span>
<span class="t" style="font-size:24px;left:327.0px;transform:scaleX(1.085);top:27.4px;line-height:31px;color:#b7b8bf;">Task(s)</span>
<span class="t" style="font-size:24px;letter-spacing:0.90px;left:462.0px;transform:scaleX(1.090);top:27.4px;line-height:31px;color:#b7b8bf;">Report</span>
<span class="t" style="font-size:24px;letter-spacing:0.60px;left:595.0px;transform:scaleX(1.090);top:27.4px;line-height:31px;color:#b7b8bf;">Approvals</span>
<span class="t" style="font-size:24px;letter-spacing:0.61px;left:768.0px;transform:scaleX(1.090);top:27.4px;line-height:31px;color:#b7b8bf;">Meeting(s)</span>
<span class="t" style="font-size:24px;letter-spacing:0.92px;left:950.0px;transform:scaleX(1.090);top:27.4px;line-height:31px;color:#b7b8bf;">Project</span>
<span class="t" style="font-size:24px;letter-spacing:0.50px;left:1088.0px;transform:scaleX(1.090);top:27.4px;line-height:31px;color:#b7b8bf;">Module(s)</span>
<span class="t" style="font-size:18.5px;font-weight:700;left:1594.8px;transform:scaleX(1.009);top:31.1px;line-height:24px;color:#fff;">Arnold Criss</span>
<span class="t" style="font-size:18.5px;font-weight:700;left:1738.8px;transform:scaleX(1.065);top:30.9px;line-height:24px;color:#fff;">Head Office</span>
<span class="t" style="font-size:12px;left:1447.5px;top:27.1px;line-height:16px;color:#fff;">1</span>
<span class="t" style="font-size:21.5px;font-weight:700;letter-spacing:0.03px;left:106.1px;transform:scaleX(1.090);top:105.6px;line-height:28px;color:#fff;">Instance IT -</span>
<span class="t" style="font-size:21.5px;left:249.1px;transform:scaleX(1.006);top:105.8px;line-height:28px;color:#6b62e2;">#IIS-29</span>
<span class="t" style="font-size:15px;letter-spacing:0.16px;left:1620.4px;transform:scaleX(1.090);top:109.8px;line-height:20px;color:#7d7f88;">Select Project</span>
<span class="t" style="font-size:19.5px;letter-spacing:0.22px;left:141.7px;transform:scaleX(1.090);top:178.3px;line-height:25px;color:#f2f2f5;">Details</span>
<span class="t" style="font-size:14.5px;letter-spacing:0.08px;left:139.4px;transform:scaleX(1.090);top:233.6px;line-height:19px;color:#dddde3;">Customer</span>
<span class="t" style="font-size:14.5px;left:270.9px;top:235.7px;line-height:19px;color:#dddde3;">:</span>
<span class="t" style="font-size:14.5px;left:139.4px;transform:scaleX(1.083);top:267.2px;line-height:19px;color:#dddde3;">Project Time Slot</span>
<span class="t" style="font-size:14.5px;left:270.9px;top:268.7px;line-height:19px;color:#dddde3;">:</span>
<span class="t" style="font-size:16px;font-weight:700;letter-spacing:0.07px;left:324.9px;transform:scaleX(1.090);top:267.8px;line-height:21px;color:#fff;">01-May-24 to 10-Jul-24</span>
<span class="t" style="font-size:14.5px;letter-spacing:0.20px;left:609.4px;transform:scaleX(1.090);top:233.0px;line-height:19px;color:#dddde3;">Platforms</span>
<span class="t" style="font-size:14.5px;left:717.4px;top:233.7px;line-height:19px;color:#dddde3;">:</span>
<span class="t" style="font-size:16.5px;left:760.1px;transform:scaleX(1.074);top:232.3px;line-height:21px;color:#ececf0;">App ,Web ,Mobile</span>
<span class="t" style="font-size:14.5px;letter-spacing:0.48px;left:609.4px;transform:scaleX(1.090);top:263.0px;line-height:19px;color:#dddde3;">Budget</span>
<span class="t" style="font-size:14.5px;left:717.4px;top:265.2px;line-height:19px;color:#dddde3;">:</span>
<span class="t" style="font-size:16.5px;left:760.1px;transform:scaleX(1.067);top:263.3px;line-height:21px;color:#ececf0;">&#8377;80,000 | Fixed</span>
<span class="t" style="font-size:14.5px;letter-spacing:0.17px;left:1155.4px;transform:scaleX(1.090);top:231.0px;line-height:19px;color:#dddde3;">Description</span>
<span class="t" style="font-size:14.5px;left:1304.4px;top:233.2px;line-height:19px;color:#dddde3;">:</span>
<span class="t" style="font-size:14.5px;left:1155.4px;transform:scaleX(1.058);top:263.8px;line-height:19px;color:#dddde3;">Project People(s)</span>
<span class="t" style="font-size:14.5px;left:1304.4px;top:266.2px;line-height:19px;color:#dddde3;">:</span>
<span class="t" style="font-size:16.5px;left:1340.1px;transform:scaleX(1.052);top:264.4px;line-height:21px;color:#ececf0;">Manager - <b>2</b> | Q/A - <b>2</b> | Assignee - <b>6</b></span>
<span class="t" style="font-size:11px;font-weight:700;left:1346.1px;top:235.9px;line-height:14px;color:#1f2030;">i</span>
<span class="t" style="font-size:11px;font-weight:700;left:1623.9px;top:267.4px;line-height:14px;color:#1f2030;">i</span>
<span class="t" style="font-size:18px;left:1698.6px;transform:scaleX(1.070);top:181.3px;line-height:23px;color:#fff;">Active</span>
<span class="t" style="font-size:16px;font-weight:700;left:1798.1px;transform:scaleX(1.053);top:179.2px;line-height:21px;color:#fff;">Overdue</span>
<span class="t" style="font-size:14px;letter-spacing:0.29px;left:150.4px;transform:scaleX(1.090);top:340.0px;line-height:18px;color:#3b4049;">Open Task(s)</span>
<span class="t" style="font-size:14px;letter-spacing:0.38px;left:397.4px;transform:scaleX(1.090);top:340.0px;line-height:18px;color:#3b4049;">Pending Task(s)</span>
<span class="t" style="font-size:14px;letter-spacing:0.37px;left:643.9px;transform:scaleX(1.090);top:340.0px;line-height:18px;color:#3b4049;">Completed Task(s)</span>
<span class="t" style="font-size:14px;letter-spacing:0.22px;left:891.2px;transform:scaleX(1.090);top:340.0px;line-height:18px;color:#3b4049;">Reported Issue(s)</span>
<span class="t" style="font-size:14px;letter-spacing:0.04px;left:1137.7px;transform:scaleX(1.090);top:340.0px;line-height:18px;color:#3b4049;">Resolved Issue(s)</span>
<span class="t" style="font-size:14px;letter-spacing:0.07px;left:1384.4px;transform:scaleX(1.090);top:340.0px;line-height:18px;color:#3b4049;">Reopen Issue(s)</span>
<span class="t" style="font-size:14px;letter-spacing:0.28px;left:1630.8px;transform:scaleX(1.090);top:340.0px;line-height:18px;color:#3b4049;">Issues Verified</span>
<span class="t" style="font-size:13px;font-weight:700;letter-spacing:0.14px;left:316.5px;transform:scaleX(1.090);top:340.1px;line-height:17px;color:#1f2229;">1782</span>
<span class="t" style="font-size:13px;font-weight:700;letter-spacing:0.14px;left:563.5px;transform:scaleX(1.090);top:340.1px;line-height:17px;color:#1f2229;">1742</span>
<span class="t" style="font-size:13px;font-weight:700;letter-spacing:0.87px;left:815.5px;transform:scaleX(1.090);top:340.1px;line-height:17px;color:#1f2229;">550</span>
<span class="t" style="font-size:13px;font-weight:700;letter-spacing:0.87px;left:1062.5px;transform:scaleX(1.090);top:340.1px;line-height:17px;color:#1f2229;">282</span>
<span class="t" style="font-size:13px;font-weight:700;letter-spacing:1.39px;left:1317.5px;transform:scaleX(1.090);top:340.1px;line-height:17px;color:#1f2229;">74</span>
<span class="t" style="font-size:13px;font-weight:700;letter-spacing:0.16px;left:1565.5px;transform:scaleX(1.090);top:340.1px;line-height:17px;color:#1f2229;">14</span>
<span class="t" style="font-size:13px;font-weight:700;left:1819.5px;top:340.1px;line-height:17px;color:#1f2229;">9</span>
<span class="t" style="font-size:16px;font-weight:700;left:164.4px;transform:scaleX(1.090);top:422.3px;line-height:21px;color:#fff;">Overview</span>
<span class="t" style="font-size:16px;letter-spacing:0.45px;left:341.2px;transform:scaleX(1.090);top:421.3px;line-height:21px;color:#f0f0f4;">Analytics</span>
<span class="t" style="font-size:16px;letter-spacing:0.28px;left:515.4px;transform:scaleX(1.090);top:422.3px;line-height:21px;color:#f0f0f4;">Report(s)</span>
<span class="t" style="font-size:16px;letter-spacing:0.56px;left:674.7px;transform:scaleX(1.090);top:422.3px;line-height:21px;color:#f0f0f4;">Document(s)</span>
<span class="t" style="font-size:16px;letter-spacing:0.33px;left:830.8px;transform:scaleX(1.090);top:422.3px;line-height:21px;color:#f0f0f4;">Activity Stream(s)</span>
<span class="t" style="font-size:16px;letter-spacing:0.39px;left:1048.6px;transform:scaleX(1.090);top:422.3px;line-height:21px;color:#f0f0f4;">Tickets</span>
<span class="t" style="font-size:16.5px;font-weight:700;left:137.3px;transform:scaleX(1.039);top:506.3px;line-height:21px;color:#fff;">Cost Breakdown</span>
<span class="t" style="font-size:16.5px;font-weight:700;left:733.3px;transform:scaleX(1.061);top:506.7px;line-height:21px;color:#fff;">Overtime Tracking</span>
<span class="t" style="font-size:16.5px;font-weight:700;left:134.8px;transform:scaleX(1.060);top:937.4px;line-height:21px;color:#fff;">Timesheet Overview</span>
<span class="t" style="font-size:16.5px;font-weight:700;left:721.5px;transform:scaleX(1.062);top:937.4px;line-height:21px;color:#fff;">Team Workload</span>
<span class="t" style="font-size:14px;font-weight:700;letter-spacing:0.57px;left:264.9px;transform:scaleX(1.090);top:660.2px;line-height:18px;color:#fff;">30%</span>
<span class="t" style="font-size:14px;font-weight:700;left:308.4px;transform:scaleX(1.039);top:703.8px;line-height:18px;color:#fff;">10%</span>
<span class="t" style="font-size:14px;font-weight:700;left:293.4px;top:743.8px;line-height:18px;color:#fff;">15%</span>
<span class="t" style="font-size:14px;font-weight:700;letter-spacing:0.76px;left:175.4px;transform:scaleX(1.090);top:708.9px;line-height:18px;color:#fff;">50%</span>
<span class="t" style="font-size:15px;left:423.7px;transform:scaleX(1.061);top:644.4px;line-height:20px;color:#d4d4da;">Lydia Rhiel -</span>
<span class="t" style="font-size:15px;left:424.4px;transform:scaleX(1.078);top:677.3px;line-height:20px;color:#d4d4da;">Arnold Chris -</span>
<span class="t" style="font-size:15px;left:424.4px;transform:scaleX(1.083);top:710.4px;line-height:20px;color:#d4d4da;">Zaire Baptista -</span>
<span class="t" style="font-size:15px;left:424.4px;transform:scaleX(1.058);top:743.3px;line-height:20px;color:#d4d4da;">Craig Rhiel -</span>
<span class="t" style="font-size:15px;letter-spacing:0.25px;left:394.4px;transform:scaleX(1.090);top:776.0px;line-height:20px;color:#d4d4da;">Total Amount -</span>
<span class="t" style="font-size:16.8px;left:556.9px;transform:scaleX(1.015);top:644.8px;line-height:22px;color:#eeeef2;">&#8377;1628.82</span>
<span class="t" style="font-size:16.8px;left:555.8px;transform:scaleX(1.038);top:677.5px;line-height:22px;color:#eeeef2;">&#8377;1600.82</span>
<span class="t" style="font-size:16.8px;left:555.8px;transform:scaleX(1.031);top:710.3px;line-height:22px;color:#eeeef2;">&#8377;1300.70</span>
<span class="t" style="font-size:16.8px;left:554.9px;transform:scaleX(1.062);top:743.2px;line-height:22px;color:#eeeef2;">&#8377;1000.80</span>
<span class="t" style="font-size:16.8px;font-weight:700;left:555.8px;transform:scaleX(0.965);top:776.1px;line-height:22px;color:#fff;">&#8377;5631.14</span>
<span class="t" style="font-size:17px;left:748.6px;transform:scaleX(1.067);top:573.0px;line-height:22px;color:#fff;">Employee Name</span>
<span class="t" style="font-size:17px;left:948.8px;transform:scaleX(1.054);top:573.0px;line-height:22px;color:#fff;">Type</span>
<span class="t" style="font-size:17px;letter-spacing:0.23px;left:1168.1px;transform:scaleX(1.090);top:573.0px;line-height:22px;color:#fff;">Log time</span>
<span class="t" style="font-size:17px;left:1322.1px;transform:scaleX(1.090);top:573.0px;line-height:22px;color:#fff;">Overtime Date</span>
<span class="t" style="font-size:17px;letter-spacing:0.18px;left:1510.8px;transform:scaleX(1.090);top:573.0px;line-height:22px;color:#fff;">Minutes</span>
<span class="t" style="font-size:17px;left:1695.6px;transform:scaleX(1.074);top:573.0px;line-height:22px;color:#fff;">Status</span>
<span class="t" style="font-size:15px;left:748.4px;transform:scaleX(1.048);top:619.6px;line-height:20px;color:#e3e3e8;">Arnold Chris</span>
<span class="t" style="font-size:15px;left:748.4px;transform:scaleX(1.024);top:665.5px;line-height:20px;color:#e3e3e8;">Craig Rhiel</span>
<span class="t" style="font-size:15px;left:748.4px;transform:scaleX(1.046);top:711.2px;line-height:20px;color:#e3e3e8;">Zaire Baptista</span>
<span class="t" style="font-size:15px;left:748.4px;transform:scaleX(1.029);top:757.2px;line-height:20px;color:#e3e3e8;">Lydia Rhiel</span>
<span class="t" style="font-size:15px;left:748.4px;transform:scaleX(1.037);top:803.2px;line-height:20px;color:#e3e3e8;">Terry Bergson</span>
<span class="t" style="font-size:15px;left:748.4px;transform:scaleX(1.034);top:849.2px;line-height:20px;color:#e3e3e8;">Maren Schleifer</span>
<span class="t" style="font-size:15px;letter-spacing:-0.12px;left:948.9px;transform:scaleX(0.940);top:619.8px;line-height:20px;color:#e3e3e8;">11:09 AM To 12:22 PM</span>
<span class="t" style="font-size:15px;left:948.9px;transform:scaleX(0.962);top:667.7px;line-height:20px;color:#e3e3e8;">1:08 PM To 2:58 PM</span>
<span class="t" style="font-size:15px;left:948.9px;transform:scaleX(1.055);top:715.5px;line-height:20px;color:#e3e3e8;">Week Off</span>
<span class="t" style="font-size:15px;left:948.9px;transform:scaleX(1.055);top:763.2px;line-height:20px;color:#e3e3e8;">Week Off</span>
<span class="t" style="font-size:15px;letter-spacing:-0.10px;left:948.9px;transform:scaleX(0.940);top:811.1px;line-height:20px;color:#e3e3e8;">10:18 AM To 3:18 PM</span>
<span class="t" style="font-size:15px;letter-spacing:-0.10px;left:948.9px;transform:scaleX(0.940);top:858.8px;line-height:20px;color:#e3e3e8;">10:18 AM To 3:18 PM</span>
<span class="t" style="font-size:15px;left:1168.4px;top:620.8px;line-height:20px;color:#e3e3e8;">-</span>
<span class="t" style="font-size:15px;left:1168.4px;top:668.7px;line-height:20px;color:#e3e3e8;">-</span>
<span class="t" style="font-size:15px;left:1168.4px;top:716.5px;line-height:20px;color:#e3e3e8;">-</span>
<span class="t" style="font-size:15px;left:1168.4px;top:764.2px;line-height:20px;color:#e3e3e8;">-</span>
<span class="t" style="font-size:15px;left:1168.4px;top:812.1px;line-height:20px;color:#e3e3e8;">-</span>
<span class="t" style="font-size:15px;left:1168.4px;top:859.8px;line-height:20px;color:#e3e3e8;">-</span>
<span class="t" style="font-size:15px;left:1322.2px;transform:scaleX(1.048);top:619.8px;line-height:20px;color:#e3e3e8;">06/09/2024</span>
<span class="t" style="font-size:15px;left:1322.2px;transform:scaleX(1.048);top:667.7px;line-height:20px;color:#e3e3e8;">06/09/2024</span>
<span class="t" style="font-size:15px;left:1322.2px;transform:scaleX(1.036);top:715.5px;line-height:20px;color:#e3e3e8;">07/09/2024</span>
<span class="t" style="font-size:15px;left:1322.2px;transform:scaleX(1.036);top:763.2px;line-height:20px;color:#e3e3e8;">07/09/2024</span>
<span class="t" style="font-size:15px;left:1322.2px;transform:scaleX(0.978);top:811.1px;line-height:20px;color:#e3e3e8;">17/09/2024</span>
<span class="t" style="font-size:15px;left:1322.2px;transform:scaleX(0.978);top:858.8px;line-height:20px;color:#e3e3e8;">17/09/2024</span>
<span class="t" style="font-size:15px;left:1510.9px;transform:scaleX(1.033);top:619.8px;line-height:20px;color:#e3e3e8;">73 Min</span>
<span class="t" style="font-size:15px;left:1510.9px;transform:scaleX(0.982);top:667.7px;line-height:20px;color:#e3e3e8;">120 Min</span>
<span class="t" style="font-size:15px;left:1510.9px;transform:scaleX(1.060);top:715.5px;line-height:20px;color:#e3e3e8;">200 Min</span>
<span class="t" style="font-size:15px;left:1510.9px;transform:scaleX(0.982);top:763.2px;line-height:20px;color:#e3e3e8;">120 Min</span>
<span class="t" style="font-size:15px;left:1510.9px;top:811.1px;line-height:20px;color:#e3e3e8;">160 Min</span>
<span class="t" style="font-size:15px;left:1510.9px;transform:scaleX(0.982);top:858.8px;line-height:20px;color:#e3e3e8;">120 Min</span>
<span class="t" style="font-size:12.5px;font-weight:700;letter-spacing:0.25px;left:1719.0px;transform:scaleX(1.090);top:623.6px;line-height:16px;color:#ffe6bd;">Pending</span>
<span class="t" style="font-size:12.5px;font-weight:700;letter-spacing:0.25px;left:1719.0px;transform:scaleX(1.090);top:717.3px;line-height:16px;color:#ffe6bd;">Pending</span>
<span class="t" style="font-size:13px;left:1717.0px;transform:scaleX(1.070);top:662.2px;line-height:17px;color:#fff;">Approved</span>
<span class="t" style="font-size:13px;left:1717.0px;transform:scaleX(1.070);top:754.8px;line-height:17px;color:#fff;">Approved</span>
<span class="t" style="font-size:11px;left:1786.0px;transform:scaleX(1.044);top:663.7px;line-height:14px;color:#f0f0f3;">6:08 pm</span>
<span class="t" style="font-size:11px;left:1786.0px;transform:scaleX(1.044);top:756.3px;line-height:14px;color:#f0f0f3;">6:08 pm</span>
<span class="t" style="font-size:12.5px;left:1695.8px;transform:scaleX(1.024);top:684.1px;line-height:16px;color:#d6d6dc;">By Darsh Vaghela at 7-13-2023</span>
<span class="t" style="font-size:12.5px;left:1695.8px;transform:scaleX(1.024);top:776.7px;line-height:16px;color:#d6d6dc;">By Darsh Vaghela at 7-13-2023</span>
<span class="t" style="font-size:13px;left:1719.5px;transform:scaleX(1.088);top:799.6px;line-height:17px;color:#fff;">Cancel</span>
<span class="t" style="font-size:13px;left:1719.5px;transform:scaleX(1.088);top:846.4px;line-height:17px;color:#fff;">Cancel</span>
<span class="t" style="font-size:12.5px;left:1695.8px;transform:scaleX(1.061);top:822.3px;line-height:16px;color:#d6d6dc;">Reason : Issue in functionality</span>
<span class="t" style="font-size:12.5px;left:1695.8px;transform:scaleX(1.061);top:869.3px;line-height:16px;color:#d6d6dc;">Reason : Issue in functionality</span>
<span class="t" style="font-size:21px;font-weight:700;left:263.7px;transform:scaleX(1.018);top:1125.7px;line-height:27px;color:#fff;">72:50</span>
<span class="t" style="font-size:15px;left:254.4px;transform:scaleX(1.071);top:1155.4px;line-height:20px;color:#ececf0;">Total Time</span>
<span class="t" style="font-size:21px;font-weight:700;left:544.9px;transform:scaleX(1.016);top:1092.9px;line-height:27px;color:#fff;">65:50</span>
<span class="t" style="font-size:17px;left:512.9px;transform:scaleX(1.081);top:1125.8px;line-height:22px;color:#6c6e7a;">Billable</span>
<span class="t" style="font-size:21px;font-weight:700;left:540.8px;transform:scaleX(1.061);top:1173.7px;line-height:27px;color:#fff;">7:00</span>
<span class="t" style="font-size:17px;left:512.9px;transform:scaleX(1.072);top:1202.2px;line-height:22px;color:#6c6e7a;">Non Billable</span>
<span class="t" style="font-size:13px;letter-spacing:0.07px;left:1564.1px;transform:scaleX(1.090);top:939.2px;line-height:17px;color:#f2f2f5;">Actual Hours</span>
<span class="t" style="font-size:13px;letter-spacing:0.08px;left:1687.9px;transform:scaleX(1.090);top:939.2px;line-height:17px;color:#f2f2f5;">Overtime Hours</span>
<span class="t" style="font-size:13.5px;letter-spacing:0.06px;left:733.9px;transform:scaleX(1.090);top:998.0px;line-height:18px;color:#f2f2f5;">50</span>
<span class="t" style="font-size:13.5px;letter-spacing:0.06px;left:733.9px;transform:scaleX(1.090);top:1052.6px;line-height:18px;color:#f2f2f5;">40</span>
<span class="t" style="font-size:13.5px;letter-spacing:0.06px;left:733.9px;transform:scaleX(1.090);top:1106.0px;line-height:18px;color:#f2f2f5;">30</span>
<span class="t" style="font-size:13.5px;letter-spacing:0.06px;left:733.9px;transform:scaleX(1.090);top:1159.7px;line-height:18px;color:#f2f2f5;">20</span>
</div>
</body></html>
